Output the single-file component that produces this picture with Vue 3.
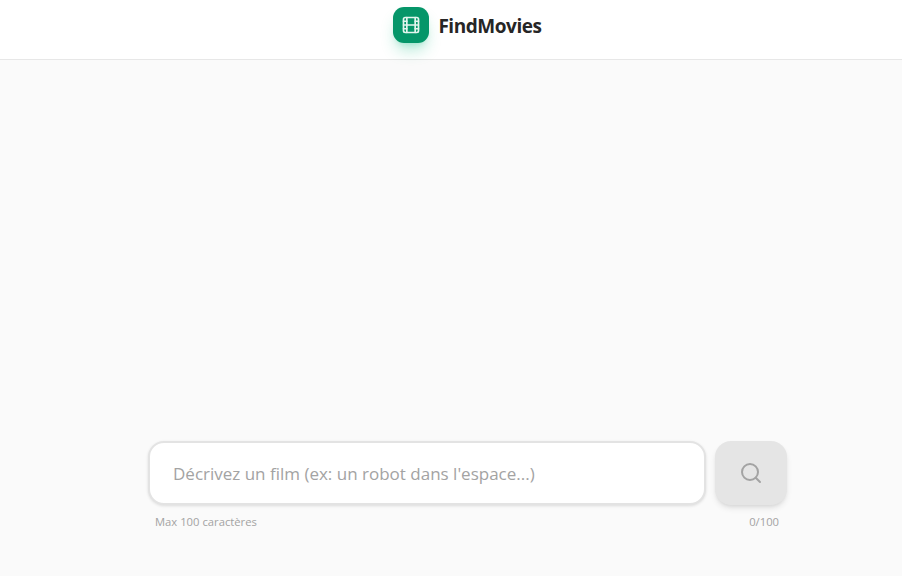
<script setup>
import { ref } from "vue";

const query = ref("");
</script>

<template>
  <div class="page">
    <header class="topbar">
      <div class="brand">
        <div class="logo">
          <svg width="20" height="20" viewBox="0 0 24 24" fill="none" stroke="currentColor" stroke-width="2" stroke-linecap="round" stroke-linejoin="round">
            <rect x="3" y="3" width="18" height="18" rx="2" />
            <path d="M7 3v18" />
            <path d="M3 7.5h4" />
            <path d="M3 12h18" />
            <path d="M3 16.5h4" />
            <path d="M17 3v18" />
            <path d="M17 7.5h4" />
            <path d="M17 16.5h4" />
          </svg>
        </div>
        <span class="title">FindMovies</span>
      </div>
    </header>

    <main class="content">
      <div class="search">
        <div class="row">
          <input v-model="query" class="input" type="text" maxlength="100" placeholder="Décrivez un film (ex: un robot dans l'espace...)" />
          <button class="submit" type="button" disabled>
            <svg width="24" height="24" viewBox="0 0 24 24" fill="none" stroke="currentColor" stroke-width="2" stroke-linecap="round" stroke-linejoin="round">
              <circle cx="11" cy="11" r="8" />
              <path d="m21 21-4.3-4.3" />
            </svg>
          </button>
        </div>
        <div class="hints">
          <span>Max 100 caractères</span>
          <span>{{ query.length }}/100</span>
        </div>
      </div>
    </main>
  </div>
</template>

<style>
html,
body {
  margin: 0;
  overflow: hidden;
  background: #fafafa;
}
</style>

<style scoped>
.page {
  width: 902px;
  height: 576px;
  display: flex;
  flex-direction: column;
  background: #fafafa;
  font-family: "Open Sans", "Noto Sans", sans-serif;
}

.topbar {
  height: 59px;
  flex-shrink: 0;
  display: flex;
  justify-content: center;
  align-items: center;
  padding-left: 33px;
  background: #fff;
  border-bottom: 1px solid #e7e7e7;
  position: relative;
}

.brand {
  display: flex;
  align-items: center;
  gap: 9px;
  margin-bottom: 9px;
}

.logo {
  width: 36px;
  height: 36px;
  border-radius: 11px;
  background: #059669;
  color: #e3f5ee;
  display: flex;
  align-items: center;
  justify-content: center;
  box-shadow: 0 10px 15px -3px rgba(16, 185, 129, 0.3), 0 4px 6px -4px rgba(16, 185, 129, 0.3);
}

.title {
  margin-top: 2px;
  font-size: 19px;
  font-weight: 700;
  color: #262626;
  letter-spacing: -0.45px;
}

.content {
  flex: 1;
  display: flex;
  flex-direction: column;
  justify-content: flex-end;
  padding: 0 115px 46px 148px;
}

.search {
  width: 639px;
}

.row {
  display: flex;
  gap: 9px;
}

.input {
  flex: 1;
  min-width: 0;
  height: 64px;
  box-sizing: border-box;
  padding: 0 23px;
  border: 2px solid #e3e3e3;
  border-radius: 16px;
  background: #fff;
  font-family: inherit;
  font-size: 17px;
  color: #262626;
  outline: none;
  box-shadow: 0 1px 3px rgba(0, 0, 0, 0.12);
}

.input::placeholder {
  color: #a3a3a3;
  opacity: 1;
}

.submit {
  width: 72px;
  height: 64px;
  flex-shrink: 0;
  border: none;
  border-radius: 16px;
  background: #e5e5e5;
  color: #a3a3a3;
  display: flex;
  align-items: center;
  justify-content: center;
  box-shadow: 0 4px 6px -1px rgba(0, 0, 0, 0.1), 0 2px 4px -2px rgba(0, 0, 0, 0.1);
}

.hints {
  display: flex;
  justify-content: space-between;
  margin-top: 9px;
  padding: 0 8px 0 7px;
  font-size: 11.25px;
  line-height: 16px;
  color: #a3a3a3;
}
</style>
